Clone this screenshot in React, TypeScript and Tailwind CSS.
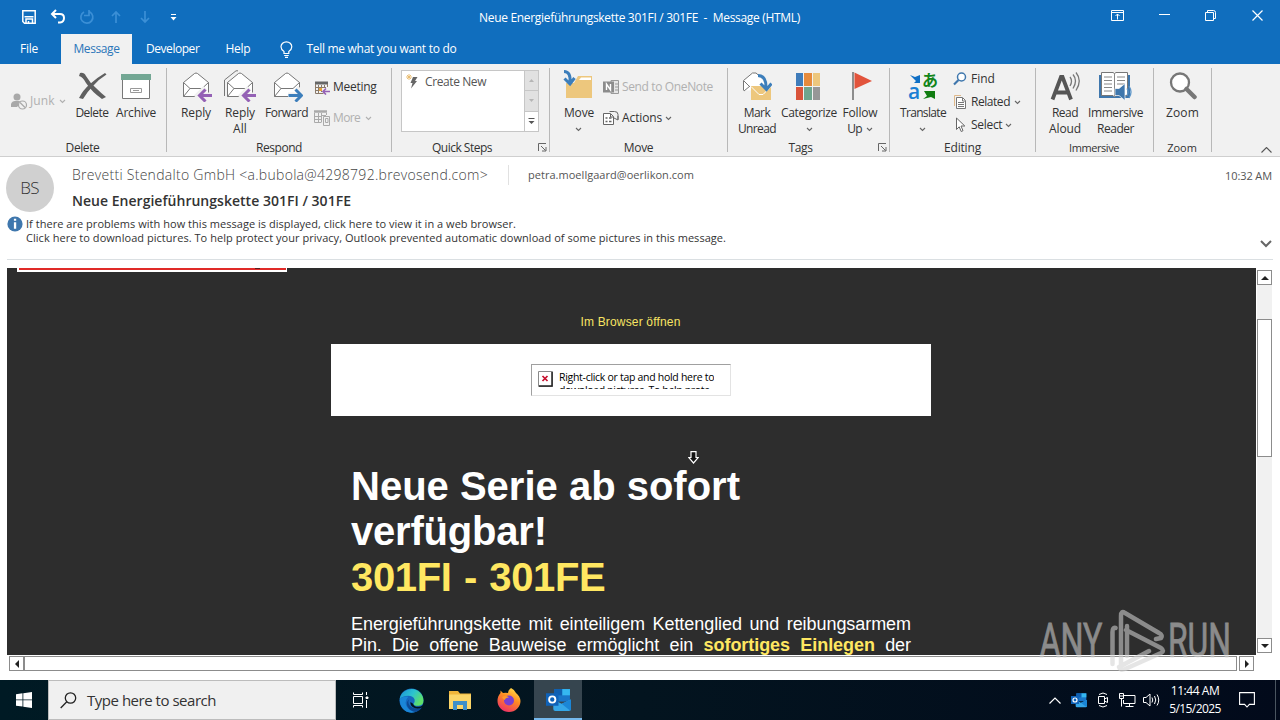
import React, { type ReactNode } from "react";

const UI = "font-['Open_Sans','Noto_Sans',sans-serif]";

function T({ children, c = "tracking-[-0.4px]" }: { children: string; c?: string }) {
  return <span className={`block whitespace-pre ${c}`}>{children}</span>;
}

function Chevron({ c = "text-[#666]" }: { c?: string }) {
  return (
    <svg width="7" height="5" viewBox="0 0 7 5" className={`shrink-0 ${c}`} fill="none" stroke="currentColor" strokeWidth="1.1">
      <path d="M1 1l2.500 2.500L6 1" />
    </svg>
  );
}

function Launcher({ c }: { c: string }) {
  return (
    <svg width="9" height="9" viewBox="0 0 9 9" className={`absolute bottom-1 ${c}`} fill="none" stroke="#666">
      <path d="M.5 8V.5H8M3 3l4.500 4.500M8 4v4H4" />
    </svg>
  );
}

type GroupProps = { c: string; label: string; labelC?: string; launcher?: string; children: ReactNode };

function Group({ c, label, labelC = "tracking-[-0.4px]", launcher, children }: GroupProps) {
  return (
    <section className={`relative flex h-[92px] shrink-0 flex-col ${c}`}>
      <div className="flex h-[76px] items-start">{children}</div>
      <div className={`flex h-4 items-center justify-center leading-4 ${labelC}`}>{label}</div>
      {launcher && <Launcher c={launcher} />}
      <div className="absolute right-0 top-1 h-[84px] w-px bg-[#b8b8b8]" />
    </section>
  );
}

function Big({ c, icon, children }: { c: string; icon: ReactNode; children: ReactNode }) {
  return (
    <button className={`flex shrink-0 flex-col items-center ${c}`}>
      <span className="flex h-[41px] items-center justify-center pt-[3px]">{icon}</span>
      <span className="flex flex-col items-center leading-4">{children}</span>
    </button>
  );
}

function Row({ c = "", icon, children }: { c?: string; icon: ReactNode; children: ReactNode }) {
  return (
    <button className={`flex h-4 items-center leading-4 ${c}`}>
      {icon}
      {children}
    </button>
  );
}

function Envelope({ children }: { children?: ReactNode }) {
  return (
    <svg width="32" height="32" viewBox="0 0 32 32" fill="none" stroke="#777">
      <path d="M3.500 12.500L14.500 3.500q1.500-1 3 0L28.500 12.500v14h-25z" fill="#fff" />
      <path d="M3.500 12.500L10 18.500h12l6.500-6M3.500 26.500l6.500-8" />
      {children}
    </svg>
  );
}

const PurpleArrow = () => (
  <>
    <path d="M32 25.500H19M25.500 18l-7.500 7.500 7.500 7" stroke="#f1f1f1" strokeWidth="6" />
    <path d="M32 25.500H19.500M25.500 19.500l-6 6 6 6" stroke="#9461b5" strokeWidth="3" />
  </>
);

function TitleBar() {
  return (
    <header className="flex h-[34px] items-center text-white">
      <div className="flex w-[479px] items-center pl-[21px]">
        <svg width="16" height="16" viewBox="0 0 16 16" fill="none" stroke="#fff" strokeWidth="1.5">
          <path d="M1.800 1.800h12.400v12.400H3.500L1.800 12.500zM3.500 7.800h9M5 14v-4h6.500v4M7.500 12v2" />
        </svg>
        <svg width="16" height="16" viewBox="0 0 16 16" className="ml-[13px]" fill="none" stroke="#fff" strokeWidth="2">
          <path d="M6 1L2 5l4 4M2.500 5H10q4 0 4 4t-4 4.500H8" />
        </svg>
        <svg width="16" height="16" viewBox="0 0 16 16" className="ml-[13px]" fill="none" stroke="#3b8fd6" strokeWidth="1.700">
          <path d="M10.500 2.800A6 6 0 1 1 5 2.900M10 1v5.500H5" />
        </svg>
        <svg width="12" height="14" viewBox="0 0 12 14" className="ml-[15px]" fill="none" stroke="#3b8fd6" strokeWidth="1.700">
          <path d="M6 13V2M2 6l4-4 4 4" />
        </svg>
        <svg width="12" height="14" viewBox="0 0 12 14" className="ml-[17px]" fill="none" stroke="#3b8fd6" strokeWidth="1.700">
          <path d="M6 1v11M2 8l4 4 4-4" />
        </svg>
        <svg width="7" height="7" viewBox="0 0 7 7" className="ml-[19px]" fill="#fff">
          <path d="M1 0h5v1H1zM.5 3h6L3.500 6.500z" />
        </svg>
      </div>
      <T c="tracking-[-0.313px] pt-[2px]">Neue Energieführungskette 301FI / 301FE  -  Message (HTML)</T>
      <div className="ml-auto flex items-center pb-[3px] pr-[17px]">
        <svg width="13" height="11" viewBox="0 0 13 11" fill="none" stroke="#fff">
          <path d="M.5.5h12v10H.5zM.5 2.500h12M6.500 9.500V4M4.500 6l2-2 2 2" />
        </svg>
        <svg width="11" height="11" viewBox="0 0 11 11" className="ml-[35px]" stroke="#fff">
          <path d="M0 4.500h11" />
        </svg>
        <svg width="11" height="11" viewBox="0 0 11 11" className="ml-[35px]" fill="none" stroke="#fff">
          <path d="M.5 2.500h8v8h-8zM2.500 2V.5h6q2 0 2 2v6H9" />
        </svg>
        <svg width="11" height="11" viewBox="0 0 11 11" className="ml-[36px]" stroke="#fff" strokeWidth="1.200">
          <path d="M.5.5l10 10M10.500.5l-10 10" />
        </svg>
      </div>
    </header>
  );
}

function Tabs() {
  return (
    <nav className="flex h-[30px] items-center leading-[30px] text-white">
      <div className="w-[61px] pl-5"><T c="tracking-[-0.25px]">File</T></div>
      <div className="flex w-[71px] justify-center bg-[#f1f1f1] text-[#2b76b9]"><T>Message</T></div>
      <div className="pl-[14px]"><T c="tracking-[-0.45px]">Developer</T></div>
      <div className="pl-[26px]"><T c="tracking-[-0.24px]">Help</T></div>
      <svg width="13" height="17" viewBox="0 0 13 17" className="ml-[30px]" fill="none" stroke="#fff" strokeWidth="1.200">
        <path d="M4 12.500v-2Q1 8.500 1 5.800a5.400 5 0 0 1 10.800 0Q11.800 8.500 8.800 10.500v2zM4.200 14.500h4.500M5 16.300h3" />
      </svg>
      <div className="pl-[13px]"><T c="tracking-[-0.289px]">Tell me what you want to do</T></div>
    </nav>
  );
}

function DeleteGroup() {
  return (
    <Group c="w-[167px]" label="Delete" labelC="tracking-[-0.4px] pr-[2px]">
      <Row
        c="mt-[29px] w-[68px] pl-[11px] text-[#b0b0b0]"
        icon={
          <svg width="17" height="17" viewBox="0 0 17 17" className="shrink-0" fill="#a9a9a9">
            <circle cx="6" cy="4" r="3.500" />
            <path d="M0 14V11q1-3 4-3h4q2 0 2 2l-4 4z" />
            <circle cx="11.500" cy="12" r="4" fill="#f1f1f1" stroke="#a9a9a9" strokeWidth="1.200" />
            <path d="M9 9.500l5 5" stroke="#a9a9a9" strokeWidth="1.200" />
          </svg>
        }
      >
        <T c="tracking-[0.1px] pl-[2px] pr-1">Junk</T>
        <Chevron c="text-[#b0b0b0]" />
      </Row>
      <Big
        c="w-12"
        icon={
          <svg width="30" height="28" viewBox="0 0 30 28" fill="#5f5f5f" className="ml-[2px]">
            <path d="M2 1q4-1 6 3 4 7 10 12 5 5 10 9l-4 2Q14 20 8 11 5 5 1 4z" />
            <path d="M28.500 2.500Q21 7 15 14 9 20 5 27L1 26Q5 18 12 12 20 5 27 1z" />
          </svg>
        }
      >
        <T c="tracking-[-0.5px]">Delete</T>
      </Big>
      <Big
        c="w-10"
        icon={
          <svg width="30" height="27" viewBox="0 0 30 27">
            <path d="M1.500 7v18.500h27V7" fill="#fff" stroke="#777" />
            <path d="M0 1h30v6H0z" fill="#73a794" />
            <path d="M9.500 15.500h11v4h-11zM12 17.500h6" fill="#fff" stroke="#999" />
          </svg>
        }
      >
        <T c="tracking-[-0.2px]">Archive</T>
      </Big>
    </Group>
  );
}

function RespondGroup() {
  return (
    <Group c="w-[225px] pl-[7px]" label="Respond" labelC="tracking-[-0.45px] pr-[8px]">
      <Big c="w-11" icon={<Envelope><PurpleArrow /></Envelope>}>
        <T c="tracking-[-0.1px]">Reply</T>
      </Big>
      <Big
        c="w-11"
        icon={
          <Envelope>
            <path d="M.5 26V10L12 .8h2" />
            <PurpleArrow />
          </Envelope>
        }
      >
        <T c="tracking-[-0.1px]">Reply</T>
        <T c="tracking-[0.1px]">All</T>
      </Big>
      <Big
        c="w-[49px]"
        icon={
          <Envelope>
            <path d="M17 25.500H31M25 18l7.500 7.500-7.500 7" stroke="#f1f1f1" strokeWidth="6" />
            <path d="M17.500 25.500H30.500M24.500 19.500l6 6-6 6" stroke="#3c7ebb" strokeWidth="3" />
          </Envelope>
        }
      >
        <T c="tracking-[-0.5px]">Forward</T>
      </Big>
      <div className="flex flex-col gap-[15px] pl-[3px] pt-[15px]">
        <Row
          icon={
            <svg width="16" height="15" viewBox="0 0 16 15" fill="none">
              <path d="M1 1.500h13v3H1z" fill="#666" />
              <path d="M1.500 4v9.500h8M13.500 4v3M4.500 5v8M7.500 5v7M10.500 5v3M2 7.500h10M2 10.500h6" stroke="#8a7a6a" />
              <path d="M5 8h3v3H5z" fill="#e8a33c" />
              <path d="M16 11.500H9.500M12 8.500l-3 3 3 3" stroke="#9461b5" strokeWidth="1.600" />
            </svg>
          }
        >
          <T c="tracking-[-0.28px] pl-[3px]">Meeting</T>
        </Row>
        <Row
          c="text-[#b0b0b0]"
          icon={
            <svg width="17" height="16" viewBox="0 0 17 16" fill="none" stroke="#aaa">
              <path d="M0 1.500h13" strokeWidth="2.500" />
              <path d="M.5 3v9.500h7M12.500 3v2M4.500 3v9M7.500 3v3M1 6.500h6M1 9.500h6M9.500 6.500h6v9h-6zM7.500 12V5.500H12M11.500 8.500h2.500v4h-2.500z" />
            </svg>
          }
        >
          <T c="tracking-[-0.6px] pl-[2px] pr-[5px]">More</T>
          <Chevron c="text-[#b0b0b0]" />
        </Row>
      </div>
    </Group>
  );
}

function QuickStepsGroup() {
  return (
    <Group c="w-[158px]" label="Quick Steps" labelC="tracking-[-0.5px] pr-[18px]" launcher="right-[3px]">
      <div className="ml-[9px] mt-[6px] flex h-[62px] w-[138px] border border-[#c6c6c6] bg-white">
        <div className="flex flex-1 items-start pl-1 pt-[3px] text-[#555]">
          <svg width="13" height="15" viewBox="0 0 13 15">
            <path d="M7 3h4.500L9 7h2l-6 7.500L6.500 9H4.500z" fill="#666" />
            <path d="M3 0v6M0 3h6M1 1l4 4M5 1L1 5" stroke="#e8b96a" strokeWidth=".9" />
          </svg>
          <T c="leading-4 tracking-[-0.4px] pl-[6px]">Create New</T>
        </div>
        <div className="flex w-[14px] flex-col divide-y divide-[#c6c6c6] border-l border-[#c6c6c6]">
          <div className="flex flex-1 items-center justify-center bg-[#e1e1e1]">
            <svg width="5" height="3" viewBox="0 0 5 3" fill="#b5b5b5"><path d="M0 3h5L2.500 0z" /></svg>
          </div>
          <div className="flex flex-1 items-center justify-center bg-[#e1e1e1]">
            <svg width="5" height="3" viewBox="0 0 5 3" fill="#b5b5b5"><path d="M0 0h5L2.500 3z" /></svg>
          </div>
          <div className="flex flex-1 items-center justify-center">
            <svg width="7" height="7" viewBox="0 0 7 7" fill="#555"><path d="M.5 0h6v1h-6zM.5 3h6l-3 3z" /></svg>
          </div>
        </div>
      </div>
    </Group>
  );
}

function MoveGroup() {
  return (
    <Group c="w-[178px]" label="Move" labelC="tracking-[-0.3px] pr-px">
      <Big
        c="w-[58px]"
        icon={
          <svg width="32" height="32" viewBox="0 0 32 32" className="-ml-[3px] -mt-[2px]">
            <path d="M4 29V14h8l4-7h14v22z" fill="#edc77d" />
            <path d="M17 11l2-2.500h10V11z" fill="#fff" />
            <path d="M2 2q8 0 6 11" fill="none" stroke="#f1f1f1" strokeWidth="6" />
            <path d="M2 2.500q7 0 6 11M2.500 9.500L8 15l4.500-6" fill="none" stroke="#3c7ebb" strokeWidth="3" />
          </svg>
        }
      >
        <T c="tracking-[-0.2px]">Move</T>
        <span className="flex h-4 items-center"><Chevron /></span>
      </Big>
      <div className="-ml-[5px] flex flex-col gap-[15px] pt-[15px]">
        <Row
          c="text-[#b0b0b0]"
          icon={
            <svg width="17" height="16" viewBox="0 0 17 16">
              <path d="M8 1.500h7.500v13H8z" fill="#e6e6e6" stroke="#9a9a9a" />
              <path d="M12 5h4M12 8h4M12 11h4" stroke="#9a9a9a" />
              <path d="M0 2.500h11v11H0z" fill="#8c8c8c" />
              <path d="M3.500 11V5l4 6V5" fill="none" stroke="#fff" strokeWidth="1.400" />
            </svg>
          }
        >
          <T c="tracking-[-0.364px] pl-[2px]">Send to OneNote</T>
        </Row>
        <Row
          icon={
            <svg width="17" height="16" viewBox="0 0 17 16" fill="none" stroke="#666">
              <path d="M.5 3.500h7l3 3v8H.5zM7.500 4v3h3" fill="#fff" />
              <path d="M2.500 8h2M6 8h2.500M2.500 11.500h2M6 11.500h2.500" strokeWidth="1.500" />
              <path d="M6.500 1.500h5q3.500 0 3.500 3v5M11 8l4 2V6" />
            </svg>
          }
        >
          <T c="tracking-[-0.1px] pl-[2px] pr-[3px]">Actions</T>
          <Chevron />
        </Row>
      </div>
    </Group>
  );
}

function TagsGroup() {
  return (
    <Group c="w-[162px] pl-1" label="Tags" labelC="tracking-[-0.35px] pr-[21px]" launcher="right-[3px]">
      <Big
        c="w-[50px]"
        icon={
          <svg width="30" height="30" viewBox="0 0 30 30">
            <path d="M1.500 19.500V9.500L10.500 2H14l9 8v9" fill="#fff" stroke="#777" />
            <path d="M2 10l6 6M2 20l6-5" stroke="#777" />
            <path d="M9 15h20v14H9z" fill="#edc77d" />
            <path d="M9 15.500l8 8h4l8-8" fill="none" stroke="#fff" />
            <path d="M16 4q9 0 8.500 13" fill="none" stroke="#f1f1f1" strokeWidth="5" />
            <path d="M16 4.500q8.500 0 8 13M18.500 12.500l6 6 5-6" fill="none" stroke="#3c7ebb" strokeWidth="3" />
          </svg>
        }
      >
        <T c="tracking-[-0.6px]">Mark</T>
        <T c="tracking-[-0.6px]">Unread</T>
      </Big>
      <Big
        c="w-[54px]"
        icon={
          <svg width="24" height="29" viewBox="0 0 24 29" className="-ml-[2px]">
            <path d="M0 1h7v13H0z" fill="#3f7cba" />
            <path d="M8 1h8v13H8z" fill="#e58a3c" />
            <path d="M17 1h7v13h-7z" fill="#edc77d" />
            <path d="M0 15h7v13H0z" fill="#d9533a" />
            <path d="M8 15h8v13H8z" fill="#6fa58e" />
            <path d="M17 15h7v13h-7z" fill="#979797" />
          </svg>
        }
      >
        <T c="tracking-[-0.33px]">Categorize</T>
        <span className="flex h-4 items-center"><Chevron /></span>
      </Big>
      <Big
        c="w-12"
        icon={
          <svg width="20" height="28" viewBox="0 0 20 28" className="ml-[4px]">
            <path d="M1 0v28" stroke="#6b6b6b" strokeWidth="1.500" />
            <path d="M2.500.5L20 9 2.500 17z" fill="#e2543c" />
          </svg>
        }
      >
        <T c="tracking-[-0.17px]">Follow</T>
        <span className="flex items-center gap-1"><T c="tracking-[-0.8px]">Up</T><Chevron /></span>
      </Big>
    </Group>
  );
}

function EditingGroup() {
  return (
    <Group c="w-[146px] pl-[6px]" label="Editing" labelC="tracking-[-0.18px] pr-[7px]">
      <Big
        c="w-[54px]"
        icon={
          <span className="relative block h-[30px] w-[28px]">
            <svg width="28" height="30" viewBox="0 0 28 30" className="absolute inset-0">
              <path d="M1 4l5 2 5-2v8H5l2-2z" fill="#0f6fc5" />
              <path d="M26 20v8l-4-2-8 2 4-3-3-5h6z" fill="#107c10" />
            </svg>
            <span className="absolute -left-px top-[10px] text-[21px] font-semibold leading-[20px] text-[#1a7fd4]">a</span>
            <span className="absolute -right-px top-0 font-['Noto_Sans_CJK_JP',sans-serif] text-[16px] font-bold leading-[17px] text-[#12851a]">あ</span>
          </span>
        }
      >
        <T c="tracking-[-0.66px]">Translate</T>
        <span className="flex h-4 items-center"><Chevron /></span>
      </Big>
      <div className="flex flex-col gap-[7px] pl-[3px] pt-[7px]">
        <Row
          icon={
            <svg width="14" height="14" viewBox="0 0 14 14" fill="none" stroke="#3f77ad">
              <circle cx="8.500" cy="5" r="4" strokeWidth="1.500" fill="#fff" />
              <path d="M5.500 8L1 12.500" strokeWidth="2.200" />
            </svg>
          }
        >
          <T c="tracking-[0px] pl-1">Find</T>
        </Row>
        <Row
          icon={
            <svg width="14" height="16" viewBox="0 0 14 16" fill="none" stroke="#777">
              <path d="M1.500 12V1.500H8" stroke="#e0b98a" />
              <path d="M3.500 3.500h6l3 3v8h-9z" fill="#fff" />
              <path d="M5 8.500h6M5 10.500h6M5 12.500h6M9.500 4v3H12" />
            </svg>
          }
        >
          <T c="tracking-[-0.45px] pl-1 pr-1">Related</T>
          <Chevron />
        </Row>
        <Row
          icon={
            <svg width="14" height="16" viewBox="0 0 14 16" fill="#fff" stroke="#666">
              <path d="M3.500 1v11.500l2.700-2.700 2 4.700 1.800-.8-2-4.700h3.800z" />
            </svg>
          }
        >
          <T c="tracking-[-0.3px] pl-1 pr-[3px]">Select</T>
          <Chevron />
        </Row>
      </div>
    </Group>
  );
}

function ImmersiveGroup() {
  return (
    <Group c="w-[118px] pl-[7px]" label="Immersive" labelC="tracking-[-0.42px] pr-[9px] text-[11px]">
      <Big
        c="w-11"
        icon={
          <svg width="30" height="30" viewBox="0 0 30 30" fill="none" stroke="#777" strokeWidth="1.300">
            <path d="M2.500 28.500L11 6h1.500L21 28.500M6 21.500h12" stroke="#555" strokeWidth="3.800" />
            <path d="M20 6q3 4 0 9M23 3.500q5 6 0 14M26 1.500q6.500 8 0 18" />
          </svg>
        }
      >
        <T c="tracking-[-0.54px]">Read</T>
        <T c="tracking-[-0.1px]">Aloud</T>
      </Big>
      <Big
        c="w-[57px]"
        icon={
          <svg width="33" height="30" viewBox="0 0 33 30">
            <path d="M0 4h31v23H0z" fill="#3f77ad" />
            <path d="M2.500 1.500H14l1.500 1 1.500-1h11.500v23H17l-1.500 1.500-1.500-1.500H2.500z" fill="#fff" stroke="#777" />
            <path d="M15.500 2.500V25M5 6h8M5 9.500h8M5 13h8M5 16.500h8M5 20h8M18 6h8M18 9.500h8M18 13h8" stroke="#888" />
            <path d="M16 17.500h4l6-5v17l-6-5h-4z" fill="#3f77ad" stroke="#fff" strokeWidth=".7" />
            <path d="M28 17.500q2 3.500 0 7M30 15q4 6 0 12" fill="none" stroke="#5d95c8" strokeWidth="1.300" />
          </svg>
        }
      >
        <T c="tracking-[-0.41px]">Immersive</T>
        <T c="tracking-[-0.46px]">Reader</T>
      </Big>
    </Group>
  );
}

function Ribbon() {
  return (
    <div className="relative flex h-[93px] border-b border-[#cfcfcf] bg-[#f1f1f1] text-[#333]">
      <DeleteGroup />
      <RespondGroup />
      <QuickStepsGroup />
      <MoveGroup />
      <TagsGroup />
      <EditingGroup />
      <ImmersiveGroup />
      <Group c="w-[58px]" label="Zoom" labelC="tracking-[0px] pr-[2px] text-[11px]">
        <Big
          c="w-[57px]"
          icon={
            <svg width="28" height="28" viewBox="0 0 28 28" fill="none" stroke="#777">
              <circle cx="11" cy="10.500" r="9" fill="#fff" strokeWidth="2.300" />
              <path d="M17.500 17l8 8" strokeWidth="4.500" strokeLinecap="round" />
            </svg>
          }
        >
          <T c="tracking-[0.1px]">Zoom</T>
        </Big>
      </Group>
      <svg width="11" height="6" viewBox="0 0 11 6" className="mb-[3px] ml-auto mr-2 self-end" fill="none" stroke="#555" strokeWidth="1.100">
        <path d="M.5 5.500l5-5 5 5" />
      </svg>
    </div>
  );
}

function MessageHeader() {
  return (
    <div className="flex h-[111px] flex-col">
      <div className="flex h-[59px] pl-[6px]">
        <div className="mt-[7px] flex size-12 shrink-0 items-center justify-center rounded-full bg-[#d0d0d0] pr-px text-[17px] font-light tracking-[-0.7px] text-[#333]">BS</div>
        <div className="ml-[18px] flex flex-col">
          <div className="flex items-center pt-2">
            <div className="w-[436px] text-[14px] font-light leading-5 text-[#444]">
              <T c="tracking-[0.284px]">{"Brevetti Stendalto GmbH <a.bubola@4298792.brevosend.com>"}</T>
            </div>
            <div className="h-5 w-px bg-[#e1e1e1]" />
            <div className="ml-[19px] pt-px text-[11px] text-[#555]"><T c="tracking-[0.03px]">petra.moellgaard@oerlikon.com</T></div>
          </div>
          <div className="pt-[6px] text-[14px] font-semibold leading-5"><T c="tracking-[0.024px]">Neue Energieführungskette 301FI / 301FE</T></div>
        </div>
        <div className="ml-auto mr-2 pt-[10px] text-[11px] leading-[17px] text-[#555]"><T c="tracking-[-0.1px]">10:32 AM</T></div>
      </div>
      <div className="mx-[7px] flex h-[44px] border-b border-[#dadfe2] text-[11px] leading-[14px]">
        <svg width="16" height="16" viewBox="0 0 16 16" className="shrink-0">
          <circle cx="8" cy="8" r="7.600" fill="#3f77ad" />
          <path d="M6.900 2.800h2.300v2H6.900zM6.900 6.300h2.300v6.500H6.900z" fill="#fff" />
        </svg>
        <div className="ml-[3px] mt-px">
          <T c="tracking-[0.034px]">If there are problems with how this message is displayed, click here to view it in a web browser.</T>
          <T c="tracking-[0.044px]">Click here to download pictures. To help protect your privacy, Outlook prevented automatic download of some pictures in this message.</T>
        </div>
        <svg width="12" height="8" viewBox="0 0 12 8" className="mb-[11px] ml-auto mr-[1px] self-end" fill="none" stroke="#666" strokeWidth="2">
          <path d="M1 1l5 5 5-5" />
        </svg>
      </div>
    </div>
  );
}

function MessageBody() {
  return (
    <div className="relative h-[387px] w-[1249px] overflow-hidden bg-[#2d2d2d] font-['Liberation_Sans',sans-serif] text-white">
      <div className="flex h-[76px] flex-col">
        <div className="ml-[10px] flex h-1 w-[270px] shrink-0 justify-center bg-white">
          <div className="flex h-[2px] w-[267px] bg-[#e02a28]"><div className="ml-[236px] h-px w-[5px] bg-[#5a2020]" /></div>
        </div>
        <div className="flex justify-center pr-[2px] pt-[41px] text-[12px] leading-[18px] text-[#f7e463]">
          <T c="tracking-[0.167px]">Im Browser öffnen</T>
        </div>
      </div>
      <div className="ml-[324px] flex h-[72px] w-[600px] items-center justify-center bg-white">
        <div className="flex h-8 w-[200px] overflow-hidden border border-b-[#e3e3e3] border-l-[#a0a0a0] border-r-[#e3e3e3] border-t-[#a0a0a0] pl-[6px] pt-[6px]">
          <svg width="15" height="17" viewBox="0 0 15 17" className="shrink-0">
            <path d="M.5.5h14v15H.5z" fill="#fff" stroke="#8a8a8a" />
            <path d="M14 1v14H1" fill="none" stroke="#222" strokeWidth="1.500" />
            <path d="M4.500 5l5 5M9.500 5l-5 5" stroke="#c8102e" strokeWidth="1.700" />
          </svg>
          <div className="ml-[6px] h-[18px] overflow-hidden font-['Open_Sans',sans-serif] text-[10.500px] leading-[13px] text-black">
            <T c="tracking-[-0.29px]">Right-click or tap and hold here to</T>
            <T c="tracking-[-0.35px]">download pictures. To help prote</T>
          </div>
        </div>
      </div>
      <div className="ml-[344px] w-[560px] pt-12">
        <h1 className="text-[40px] font-bold leading-[45.500px]">
          <T c="">Neue Serie ab sofort</T>
          <T c="tracking-[-0.2px] -mt-px mb-px">verfügbar!</T>
          <T c="tracking-[-0.35px] [word-spacing:1.600px] text-[#ffe761]">301FI - 301FE</T>
        </h1>
        <div className="mt-[13px] text-[18px] leading-[21px] tracking-[-0.060px]">
          <p className="text-justify [text-align-last:justify]">Energieführungskette mit einteiligem Kettenglied und reibungsarmem</p>
          <p className="text-justify [text-align-last:justify]">
            Pin. Die offene Bauweise ermöglicht ein <b className="text-[#ffe761]">sofortiges Einlegen</b> der
          </p>
        </div>
      </div>
      <svg width="11" height="13" viewBox="0 0 11 13" className="absolute left-[681px] top-[183px]">
        <path d="M3 .6h5v5.900h2.300L5.500 12 .7 6.500H3z" fill="#111" stroke="#fff" strokeWidth="1.200" />
      </svg>
    </div>
  );
}

function ScrollButton({ d }: { d: string }) {
  return (
    <div className="flex size-[15px] shrink-0 items-center justify-center border border-[#8c8c8c] bg-white">
      <svg width="8" height="8" viewBox="0 0 8 8" fill="#222"><path d={d} /></svg>
    </div>
  );
}

function Watermark() {
  return (
    <svg width="196" height="64" viewBox="0 0 196 64" className="absolute left-[1037px] top-[608px] opacity-[0.57]" fill="#d3d3d3" stroke="#d3d3d3">
      <text x="2.500" y="49" fontFamily="Roboto, sans-serif" fontSize="48" strokeWidth=".8" textLength="63" lengthAdjust="spacingAndGlyphs">ANY</text>
      <text x="131" y="49" fontFamily="Roboto, sans-serif" fontSize="48" strokeWidth=".8" textLength="63" lengthAdjust="spacingAndGlyphs">RUN</text>
      <path
        d="M75.500 56V24q0-5 3-4M84 58V8q0-6 4-3L122 25q4 2 2 5L119 31M89 22l35 18q4 3 0 5L88 61q-5 2-6-2L112 43M90 48V18"
        fill="none"
        strokeWidth="4.500"
        strokeLinejoin="round"
        strokeLinecap="round"
      />
    </svg>
  );
}

function OutlookIcon({ size }: { size: string }) {
  return (
    <svg viewBox="0 0 24 22" className={size}>
      <path d="M8 1h15v12H8z" fill="#1976c9" />
      <path d="M15.500 1H23v6h-7.500z" fill="#35b8f1" />
      <path d="M8 1h7.500v6H8z" fill="#0f5fb0" />
      <path d="M7 11l8 4 9-4v9q0 2-2 2H9q-2 0-2-2z" fill="#35a7e8" />
      <path d="M15 15l9-4v9q0 1-1 1.500z" fill="#1b86d6" />
      <path d="M0 5h12v12H0z" fill="#0f62b8" />
      <circle cx="6" cy="11" r="3" fill="none" stroke="#fff" strokeWidth="1.800" />
    </svg>
  );
}

function Taskbar() {
  return (
    <footer className="flex h-10 bg-gradient-to-r from-[#001a24] via-[#03141f] to-[#020a1b] text-white">
      <div className="flex w-12 items-center justify-center">
        <svg width="16" height="16" viewBox="0 0 16 16" fill="#fff">
          <path d="M0 2.200L6.500 1.300v6.200H0zM7.300 1.200L16 0v7.500H7.300zM0 8.300h6.500v6.300L0 13.700zM7.300 8.300H16V16l-8.700-1.200z" />
        </svg>
      </div>
      <div className="flex w-[288px] items-center border border-[#bcbcbc] bg-[#f0f0f0] pl-[11px] text-[15px] text-[#333]">
        <svg width="17" height="17" viewBox="0 0 17 17" fill="none" stroke="#222" strokeWidth="1.300">
          <circle cx="10.500" cy="6" r="5.200" />
          <path d="M6.800 9.800L.7 16" />
        </svg>
        <T c="tracking-[-0.476px] pl-[10px]">Type here to search</T>
      </div>
      <div className="flex w-12 items-center justify-center">
        <svg width="17" height="16" viewBox="0 0 17 16" fill="none" stroke="#fff">
          <path d="M1.500 .5v2h9v-2M1.500 15.500v-2h9v2M1.500 4.500h9v7h-9zM14.500 0v3M14.500 8v8" />
          <path d="M14 5h2v1.500h-2z" fill="#fff" />
        </svg>
      </div>
      <div className="flex w-[54px] items-center justify-center">
        <svg width="25" height="25" viewBox="0 0 24 24">
          <defs>
            <linearGradient id="edgeTop" x1="0" y1="0" x2="1" y2=".5">
              <stop offset="0" stopColor="#1b8fd6" />
              <stop offset=".55" stopColor="#2cc3d0" />
              <stop offset="1" stopColor="#5ee06a" />
            </linearGradient>
          </defs>
          <circle cx="12" cy="12" r="11.500" fill="#1668bf" />
          <path d="M.6 11A11.500 11.500 0 0 1 23.500 12q0 4.500-4.500 5-5 .3-5-2 1.500-2 1-4Q13.500 7.500 9 7.500 3 7.500.6 11z" fill="url(#edgeTop)" />
          <path d="M9 8.500Q5 12 7 17q2.500 5 9 6-8 2.500-13-4Q0 14 1 10.500 4 7 9 8.500z" fill="#1a86d8" />
          <path d="M9.500 11q-1.500 4 2 7 4 3 9.500.5l1 .2q-2 3.300-5.500 4.300-6-.5-8.500-5.500-1.500-4 1.500-6.500z" fill="#0c4a94" />
          <path d="M13.500 15q.5 3 5 3 2 0 4.500-1.500-.2 1.200-1 2.200-4.500 1.800-8 0Q10.500 17 11 13.500z" fill="#03141f" />
        </svg>
      </div>
      <div className="flex w-[44px] items-center justify-center">
        <svg width="22" height="19" viewBox="0 0 22 19">
          <path d="M0 0h9l2 2.500h11V18H0z" fill="#f0b53a" />
          <path d="M0 3.500h22V18H0z" fill="#fbd568" />
          <path d="M4 19v-9h14v9h-4v-5H8v5z" fill="#3d8fc9" />
        </svg>
      </div>
      <div className="flex w-[52px] items-center justify-center pl-px">
        <svg width="24" height="24" viewBox="0 0 24 24">
          <defs>
            <linearGradient id="fox" x1=".8" y1="0" x2=".3" y2="1">
              <stop offset="0" stopColor="#ffe14a" />
              <stop offset=".45" stopColor="#ff8b22" />
              <stop offset="1" stopColor="#ee2f68" />
            </linearGradient>
          </defs>
          <path d="M14 0q4 2 5 5 4 3 4.500 8A11.500 11 0 0 1 .5 13Q.5 8 3.500 5V2.500L6 5q3-.5 5 0 0-3 3-5z" fill="url(#fox)" />
          <circle cx="12" cy="12.500" r="5" fill="#7a3fd0" />
          <path d="M5 9q4-2 7 .5-4 0-4 2.500-2 0-3-3z" fill="#ff9a2a" />
        </svg>
      </div>
      <div className="flex w-12 items-center justify-center border-b-2 border-[#76b9ed] bg-[#36454f]">
        <OutlookIcon size="w-[25px] h-[23px]" />
      </div>
      <div className="ml-auto flex items-center">
        <svg width="12" height="7" viewBox="0 0 12 7" fill="none" stroke="#fff" strokeWidth="1.200"><path d="M.5 6.500l5.500-5.500 5.500 5.500" /></svg>
        <span className="ml-[10px] flex"><OutlookIcon size="w-4 h-4" /></span>
        <svg width="12" height="16" viewBox="0 0 12 16" className="ml-[10px]" fill="none" stroke="#fff">
          <path d="M1.500 4.500h6v7h-6zM7.500 7l3-1.500v5L7.500 9M2 2.500q4-3 8 0M2 13.500q4 3 8 0" />
        </svg>
        <svg width="17" height="14" viewBox="0 0 17 14" className="ml-[10px]" fill="none" stroke="#fff">
          <path d="M5 2.500h11v8H4.500V7M.5.5h4v5h-4zM.5 3h4M2.500 5.500v8M10.500 10.500v3M6.500 13.500h8" />
        </svg>
        <svg width="17" height="14" viewBox="0 0 17 14" className="ml-[7px]" fill="none" stroke="#fff">
          <path d="M.5 4.500h2.500L7 1v12L3 9.500H.5zM9 4.500q1.500 2.500 0 5M11.500 3q2.500 4 0 8M14 1.500q3.500 5.500 0 11" />
        </svg>
        <div className="flex w-[70px] flex-col items-center text-[12px] leading-[18px]">
          <T c="tracking-[-0.45px]">11:44 AM</T>
          <T c="tracking-[-0.59px]">5/15/2025</T>
        </div>
        <svg width="16" height="16" viewBox="0 0 16 16" className="ml-[9px] mr-[20px]" fill="none" stroke="#fff" strokeWidth="1.100">
          <path d="M.6.6h14.800v11.800h-5L8 15l-2.400-2.600h-5z" />
        </svg>
        <div className="mr-1 h-10 w-px bg-[#4a5560]" />
      </div>
    </footer>
  );
}

export default function App() {
  return (
    <div className={`relative flex h-[720px] w-[1280px] flex-col overflow-hidden bg-white text-[12px] text-[#333] ${UI}`}>
      <div className="h-16 bg-[#106ebe]">
        <TitleBar />
        <Tabs />
      </div>
      <Ribbon />
      <MessageHeader />
      <div className="flex h-[387px] pl-[7px]">
        <MessageBody />
        <div className="ml-px mt-[2px] flex h-[383px] w-[15px] flex-col bg-[#f1f1f1]">
          <ScrollButton d="M0 6h8L4 2z" />
          <div className="mt-[34px] h-[138px] border border-[#8c8c8c] bg-white" />
          <div className="mt-auto"><ScrollButton d="M0 2h8L4 6z" /></div>
        </div>
      </div>
      <div className="flex h-[25px] pl-[9px] pt-px">
        <ScrollButton d="M6 0v8L2 4z" />
        <div className="h-[15px] w-[1213px] border border-[#8c8c8c] bg-white" />
        <div className="ml-[2px]"><ScrollButton d="M2 0v8l4-4z" /></div>
      </div>
      <Taskbar />
      <Watermark />
    </div>
  );
}
